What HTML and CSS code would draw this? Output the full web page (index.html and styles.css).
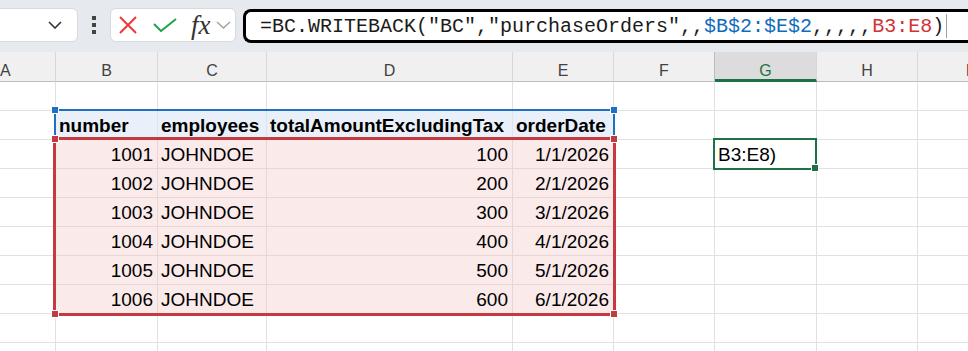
FILE: index.html
```html
<!DOCTYPE html>
<html lang="en">
<head>
    <meta charset="UTF-8">
    <title>BC.WRITEBACK</title>
    <link rel="stylesheet" href="styles.css">
</head>
<body>
    <div class="toolbar">
        <div class="name-box">
            <svg class="chevron" width="14" height="8" viewBox="0 0 14 8"><path d="M1 1l6 6 6-6" fill="none" stroke="#333" stroke-width="1.6"/></svg>
        </div>
        <div class="grip"><span></span><span></span><span></span></div>
        <div class="fx-group">
            <svg class="icon-cancel" width="20" height="20" viewBox="0 0 20 20"><path d="M2 2l16 16M18 2L2 18" stroke="#f0353f" stroke-width="2"/></svg>
            <svg class="icon-enter" width="24" height="14" viewBox="0 0 24 14"><path d="M1 6l7 7L23 1" fill="none" stroke="#22a14c" stroke-width="2"/></svg>
            <span class="fx">fx</span>
            <svg class="icon-more" width="15" height="8" viewBox="0 0 15 8"><path d="M1 1l6.5 6L14 1" fill="none" stroke="#a3a3a3" stroke-width="1.5"/></svg>
        </div>
        <div class="formula">
            <span>=BC.WRITEBACK("BC","purchaseOrders",,</span><span class="ref-blue">$B$2:$E$2</span><span>,,,,,</span><span class="ref-red">B3:E8</span><span>)</span><span class="caret"></span>
        </div>
    </div>

    <div class="sheet">
        <div class="cells">
            <div class="col col-a">A</div>
            <div class="col">B</div>
            <div class="col">C</div>
            <div class="col">D</div>
            <div class="col">E</div>
            <div class="col col-before-sel">F</div>
            <div class="col col-sel">G</div>
            <div class="col">H</div>
            <div class="col">I</div>

            <!-- row 1 -->
            <div class="cell"></div><div class="cell"></div><div class="cell"></div><div class="cell"></div><div class="cell"></div><div class="cell"></div><div class="cell"></div><div class="cell"></div><div class="cell"></div>

            <!-- row 2: table header -->
            <div class="cell"></div>
            <div class="cell hdr">number</div>
            <div class="cell hdr">employees</div>
            <div class="cell hdr">totalAmountExcludingTax</div>
            <div class="cell hdr">orderDate</div>
            <div class="cell"></div><div class="cell"></div><div class="cell"></div><div class="cell"></div>

            <!-- row 3 -->
            <div class="cell"></div>
            <div class="cell data num">1001</div>
            <div class="cell data">JOHNDOE</div>
            <div class="cell data num">100</div>
            <div class="cell data num">1/1/2026</div>
            <div class="cell"></div>
            <div class="cell">B3:E8)</div>
            <div class="cell"></div><div class="cell"></div>

            <!-- row 4 -->
            <div class="cell"></div>
            <div class="cell data num">1002</div>
            <div class="cell data">JOHNDOE</div>
            <div class="cell data num">200</div>
            <div class="cell data num">2/1/2026</div>
            <div class="cell"></div><div class="cell"></div><div class="cell"></div><div class="cell"></div>

            <!-- row 5 -->
            <div class="cell"></div>
            <div class="cell data num">1003</div>
            <div class="cell data">JOHNDOE</div>
            <div class="cell data num">300</div>
            <div class="cell data num">3/1/2026</div>
            <div class="cell"></div><div class="cell"></div><div class="cell"></div><div class="cell"></div>

            <!-- row 6 -->
            <div class="cell"></div>
            <div class="cell data num">1004</div>
            <div class="cell data">JOHNDOE</div>
            <div class="cell data num">400</div>
            <div class="cell data num">4/1/2026</div>
            <div class="cell"></div><div class="cell"></div><div class="cell"></div><div class="cell"></div>

            <!-- row 7 -->
            <div class="cell"></div>
            <div class="cell data num">1005</div>
            <div class="cell data">JOHNDOE</div>
            <div class="cell data num">500</div>
            <div class="cell data num">5/1/2026</div>
            <div class="cell"></div><div class="cell"></div><div class="cell"></div><div class="cell"></div>

            <!-- row 8 -->
            <div class="cell"></div>
            <div class="cell data num">1006</div>
            <div class="cell data">JOHNDOE</div>
            <div class="cell data num">600</div>
            <div class="cell data num">6/1/2026</div>
            <div class="cell"></div><div class="cell"></div><div class="cell"></div><div class="cell"></div>

            <!-- rows 9, 10 -->
            <div class="cell"></div><div class="cell"></div><div class="cell"></div><div class="cell"></div><div class="cell"></div><div class="cell"></div><div class="cell"></div><div class="cell"></div><div class="cell"></div>
            <div class="cell"></div><div class="cell"></div><div class="cell"></div><div class="cell"></div><div class="cell"></div><div class="cell"></div><div class="cell"></div><div class="cell"></div><div class="cell"></div>
        </div>

        <!-- range outlines drawn over the cells -->
        <div class="marks">
            <div class="range range-head">
                <span class="handle handle-tl"></span>
                <span class="handle handle-tr"></span>
            </div>
            <div class="range range-data">
                <span class="handle handle-tl"></span>
                <span class="handle handle-tr"></span>
                <span class="handle handle-bl"></span>
                <span class="handle handle-br"></span>
            </div>
            <div class="range range-sel">
                <span class="fill-handle"></span>
            </div>
        </div>
    </div>
</body>
</html>
```

FILE: styles.css
```css
* {
    box-sizing: border-box;
}
html, body {
    margin: 0;
    height: 100%;
}
body {
    font-family: "Liberation Sans", Arial, sans-serif;
    background: #fff;
    overflow: hidden;
}

/* formula bar */
.toolbar {
    display: flex;
    align-items: flex-start;
    height: 52px;
    padding-top: 8px;
    background: #e6e9ee;
}
.name-box {
    display: flex;
    align-items: center;
    justify-content: flex-end;
    width: 88px;
    height: 34px;
    margin-left: -10px;
    padding-right: 15px;
    background: #fff;
    border: 1px solid #d6d9de;
    border-radius: 6px;
}
.grip {
    display: flex;
    flex-direction: column;
    gap: 3px;
    margin: 8px 0 0 14px;
}
.grip span {
    width: 4px;
    height: 4px;
    background: #444;
}
.fx-group {
    display: flex;
    align-items: center;
    width: 126px;
    height: 34px;
    margin-left: 14px;
    padding-left: 7px;
    background: #fff;
    border: 1px solid #d6d9de;
    border-radius: 6px;
}
.icon-enter {
    margin-left: 15px;
}
.fx {
    margin-left: 14px;
    font-family: "Liberation Serif", "Times New Roman", serif;
    font-style: italic;
    font-size: 27px;
    line-height: 26px;
    color: #333;
}
.icon-more {
    margin-left: 5px;
}
.formula {
    display: flex;
    align-items: center;
    flex: 1;
    height: 34px;
    margin: 1px -20px 0 7px;
    padding-left: 14px;
    background: #fff;
    border: 3px solid #000;
    border-right: none;
    border-radius: 8px 0 0 8px;
    font-family: "Liberation Mono", "Courier New", monospace;
    font-size: 20px;
    color: #1b1b1b;
    white-space: nowrap;
}
.ref-blue {
    color: #0f6cbd;
}
.ref-red {
    color: #d13438;
}
.caret {
    width: 1px;
    height: 24px;
    margin-left: 2px;
    background: #a0a0a0;
}

/* grid */
.sheet {
    display: grid;
    overflow: hidden;
}
.cells, .marks {
    grid-area: 1 / 1;
    display: grid;
    grid-template-columns: 56px 102px 109px 246px 101px 101px 102px 101px 101px;
    grid-template-rows: 30px repeat(10, 29px);
}
.marks {
    pointer-events: none;
}
.col {
    padding-top: 8px;
    background: #f0f0f0;
    border-right: 1px solid #d8d8d8;
    border-bottom: 1px solid #bdbdbd;
    font-size: 16px;
    line-height: 21px;
    text-align: center;
    color: #424242;
}
.col-a {
    text-align: left;
}
.col-before-sel {
    border-right-color: #bdbdbd;
}
.col-sel {
    background: #dcdcdc;
    color: #1e7145;
    border-bottom: 3px solid #1e7145;
}
.cell {
    padding: 1px 3px 0;
    border-right: 1px solid #e1e1e1;
    border-bottom: 1px solid #e1e1e1;
    font-size: 19px;
    line-height: 28px;
    color: #000;
    white-space: nowrap;
    overflow: hidden;
}
.num {
    text-align: right;
    padding-right: 4px;
}
.hdr {
    background: #e9f0fa;
    border-right-color: #dde4ee;
    font-weight: bold;
}
.data {
    background: #fbeaea;
    border-color: #e6d6d6;
}

/* range outlines */
.range {
    position: relative;
}
.range-head {
    grid-row: 3;
    grid-column: 2 / 6;
    margin: -2px -1px 0 -2px;
    border: 2px solid #1f6fc4;
    border-bottom: 0;
}
.range-data {
    grid-row: 4 / 10;
    grid-column: 2 / 6;
    margin: -3px -2px -2px -3px;
    border: 3px solid #c53940;
}
.range-sel {
    grid-row: 4;
    grid-column: 7;
    margin: -2px 0 -1px -2px;
    border: 2px solid #1e7145;
}
.handle {
    position: absolute;
    width: 6px;
    height: 6px;
    box-shadow: 0 0 0 1px #fff;
}
.range-head .handle {
    background: #1f6fc4;
}
.range-data .handle {
    background: #c53940;
}
.handle-tl { top: -4px; left: -4px; }
.handle-tr { top: -4px; right: -4px; }
.handle-bl { bottom: -4px; left: -4px; }
.handle-br { bottom: -4px; right: -4px; }
.fill-handle {
    position: absolute;
    right: -3px;
    bottom: -3px;
    width: 6px;
    height: 6px;
    background: #1e7145;
    box-shadow: 0 0 0 1px #fff;
}
```
